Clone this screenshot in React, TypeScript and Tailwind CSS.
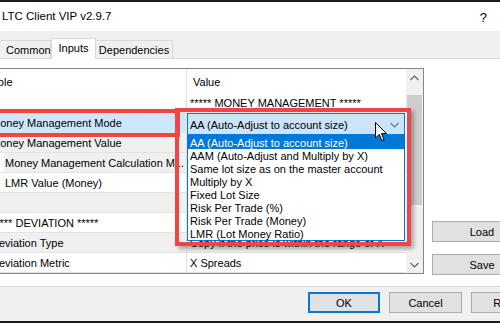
type Row = {
  label: string;
  value?: string;
  gray?: boolean;
  indent?: boolean;
  selected?: boolean;
};

const rows: Row[] = [
  { label: '', value: '***** MONEY MANAGEMENT *****' },
  { label: 'Money Management Mode', selected: true },
  { label: 'Money Management Value', gray: true },
  { label: 'Money Management Calculation M...', gray: true, indent: true },
  { label: 'LMR Value (Money)', indent: true },
  { label: '', gray: true },
  { label: '***** DEVIATION *****' },
  { label: 'Deviation Type', value: 'Copy if the price is within the range of X', gray: true },
  { label: 'Deviation Metric', value: 'X Spreads' },
];

const options = [
  'AA (Auto-Adjust to account size)',
  'AAM (Auto-Adjust and Multiply by X)',
  'Same lot size as on the master account',
  'Multiply by X',
  'Fixed Lot Size',
  'Risk Per Trade (%)',
  'Risk Per Trade (Money)',
  'LMR (Lot Money Ratio)',
];

function Chevron({ up = false, color = '#606060' }: { up?: boolean; color?: string }) {
  return (
    <svg width="9" height="6" viewBox="0 0 9 6">
      <path
        d={up ? 'M0.5 5 L4.5 1 L8.5 5' : 'M0.5 1 L4.5 5 L8.5 1'}
        fill="none"
        stroke={color}
        strokeWidth="1.1"
      />
    </svg>
  );
}

function TableRow({ row }: { row: Row }) {
  const bg = row.gray ? 'bg-[#f0f0f0]' : 'bg-white';
  return (
    <div className={`flex h-[20px] border-b border-[#e3e3e3] ${bg}`}>
      {/* label cell */}
      <div
        className={`w-[187px] shrink-0 flex items-center pt-[2px] overflow-hidden whitespace-nowrap border-r border-[#e3e3e3] ${
          row.selected ? 'bg-[#cce8ff]' : ''
        } ${row.indent && row.gray ? 'border-l-[4px] border-l-white' : ''}`}>
        {row.label && (
          <span className={row.indent ? (row.gray ? 'pl-[1px]' : 'pl-[5px]') : 'ml-[-9px]'}>
            {row.label}
          </span>
        )}
      </div>
      {/* value cell */}
      <div className="relative flex-1 flex items-center pt-[2px] pl-[3px] whitespace-nowrap overflow-visible">
        {row.selected ? (
          <div className="absolute left-0 top-0 z-10 w-[218px] h-[22px] border border-[#0078d7] bg-[#cce4f7] flex items-center justify-between pt-[2px] pl-[2px] pr-[5px]">
            <span>AA (Auto-Adjust to account size)</span>
            <Chevron color="#707070" />
          </div>
        ) : (
          row.value && <span>{row.value}</span>
        )}
      </div>
    </div>
  );
}

export default function App() {
  return (
    <div className="relative w-[500px] h-[323px] overflow-hidden bg-[#f0f0f0] flex flex-col font-['Liberation_Sans',Arial,sans-serif] text-[11px] text-black leading-none">
      {/* top strip */}
      <div className="h-[2px] bg-[#1c1c1c] shrink-0" />

      {/* title bar */}
      <div className="h-[29px] shrink-0 bg-white flex items-center justify-between pl-[2px] pr-[13px] pt-[1px] text-[11.5px]">
        <span>LTC Client VIP v2.9.7</span>
        <span className="text-[13px]">?</span>
      </div>

      {/* tabs */}
      <div className="h-[27px] shrink-0 flex items-end">
        <div className="ml-[-2px] w-[53px] h-[18px] border border-b-0 border-[#d9d9d9] flex items-center pt-[1px] pl-[7px]">
          Common
        </div>
        <div className="w-[45px] h-[21px] bg-white border border-b-0 border-[#d9d9d9] flex items-center justify-center relative top-px z-10 pb-[2px]">
          Inputs
        </div>
        <div className="w-[77px] h-[18px] border border-b-0 border-l-0 border-[#d9d9d9] flex items-center justify-center pt-[1px]">
          Dependencies
        </div>
      </div>

      {/* tab panel */}
      <div className="h-[229px] shrink-0 bg-white border-y border-[#d9d9d9] pt-[9px] flex">
        {/* list view */}
        <div className="w-[424px] h-[206px] shrink-0 border border-l-0 border-[#828790] flex">
          <div className="w-[406px] flex flex-col">
            <div className="flex h-[24px] bg-white">
              <div className="w-[187px] shrink-0 border-r border-[#e3e3e3] flex items-center pt-[2px] overflow-hidden whitespace-nowrap">
                <span className="ml-[-27px]">Variable</span>
              </div>
              <div className="flex items-center pt-[2px] pl-[6px]">Value</div>
            </div>
            {rows.map((row, i) => (
              <TableRow key={i} row={row} />
            ))}
          </div>
          {/* scrollbar */}
          <div className="w-[17px] bg-[#f0f0f0] flex flex-col">
            <div className="h-[17px] flex items-center justify-center">
              <Chevron up />
            </div>
            <div className="flex-1 pt-[9px]">
              <div className="mx-px h-[110px] bg-[#cdcdcd]" />
            </div>
            <div className="h-[17px] flex items-center justify-center">
              <Chevron />
            </div>
          </div>
        </div>

        {/* side buttons */}
        <div className="ml-[8px] pt-[153px] flex flex-col gap-[12px]">
          <div className="w-[100px] h-[21px] bg-[#e1e1e1] border border-[#adadad] flex items-center justify-center pt-[1px]">
            Load
          </div>
          <div className="w-[100px] h-[21px] bg-[#e1e1e1] border border-[#adadad] flex items-center justify-center pt-[1px]">
            Save
          </div>
        </div>
      </div>

      {/* bottom buttons */}
      <div className="flex-1 pl-[308px] pt-[5px] flex gap-[9px]">
        <div className="w-[72px] h-[21px] shrink-0 bg-[#e1e1e1] border-2 border-[#0078d7] flex items-center justify-center pt-[1px]">
          OK
        </div>
        <div className="w-[73px] h-[21px] shrink-0 bg-[#e1e1e1] border border-[#adadad] flex items-center justify-center pt-[1px]">
          Cancel
        </div>
        <div className="w-[73px] h-[21px] shrink-0 bg-[#e1e1e1] border border-[#adadad] flex items-center justify-center pt-[1px]">
          Reset
        </div>
      </div>
      <div className="h-[2px] bg-[#1c1c1c] shrink-0" />

      {/* dropdown list */}
      <div className="absolute left-[187px] top-[135px] z-20 w-[218px] border border-[#0078d7] bg-white flex flex-col">
        {options.map((o, i) => (
          <div
            key={o}
            className={`h-[13px] flex items-center pt-[1px] pl-[2px] whitespace-nowrap ${
              i === 0 ? 'bg-[#0078d7] text-white' : ''
            }`}>
            {o}
          </div>
        ))}
      </div>

      {/* red highlight boxes */}
      <div className="absolute left-[-6px] top-[109px] z-30 w-[186px] h-[28px] border-[4px] border-[#f04545]" />
      <div className="absolute left-[175px] top-[108px] z-30 w-[236px] h-[138px] border-[4px] border-[#f04545] shadow-[3px_3px_4px_rgba(0,0,0,0.3)]" />

      {/* mouse cursor */}
      <svg className="absolute left-[375px] top-[122px] z-40" width="13" height="20" viewBox="0 0 13 20">
        <path
          d="M0.5 0.5 L0.5 16 L4.3 12.4 L6.8 18.5 L9 17.6 L6.5 11.6 L11.5 11.6 Z"
          fill="white"
          stroke="black"
          strokeWidth="1"
          strokeLinejoin="miter"
        />
      </svg>
    </div>
  );
}
